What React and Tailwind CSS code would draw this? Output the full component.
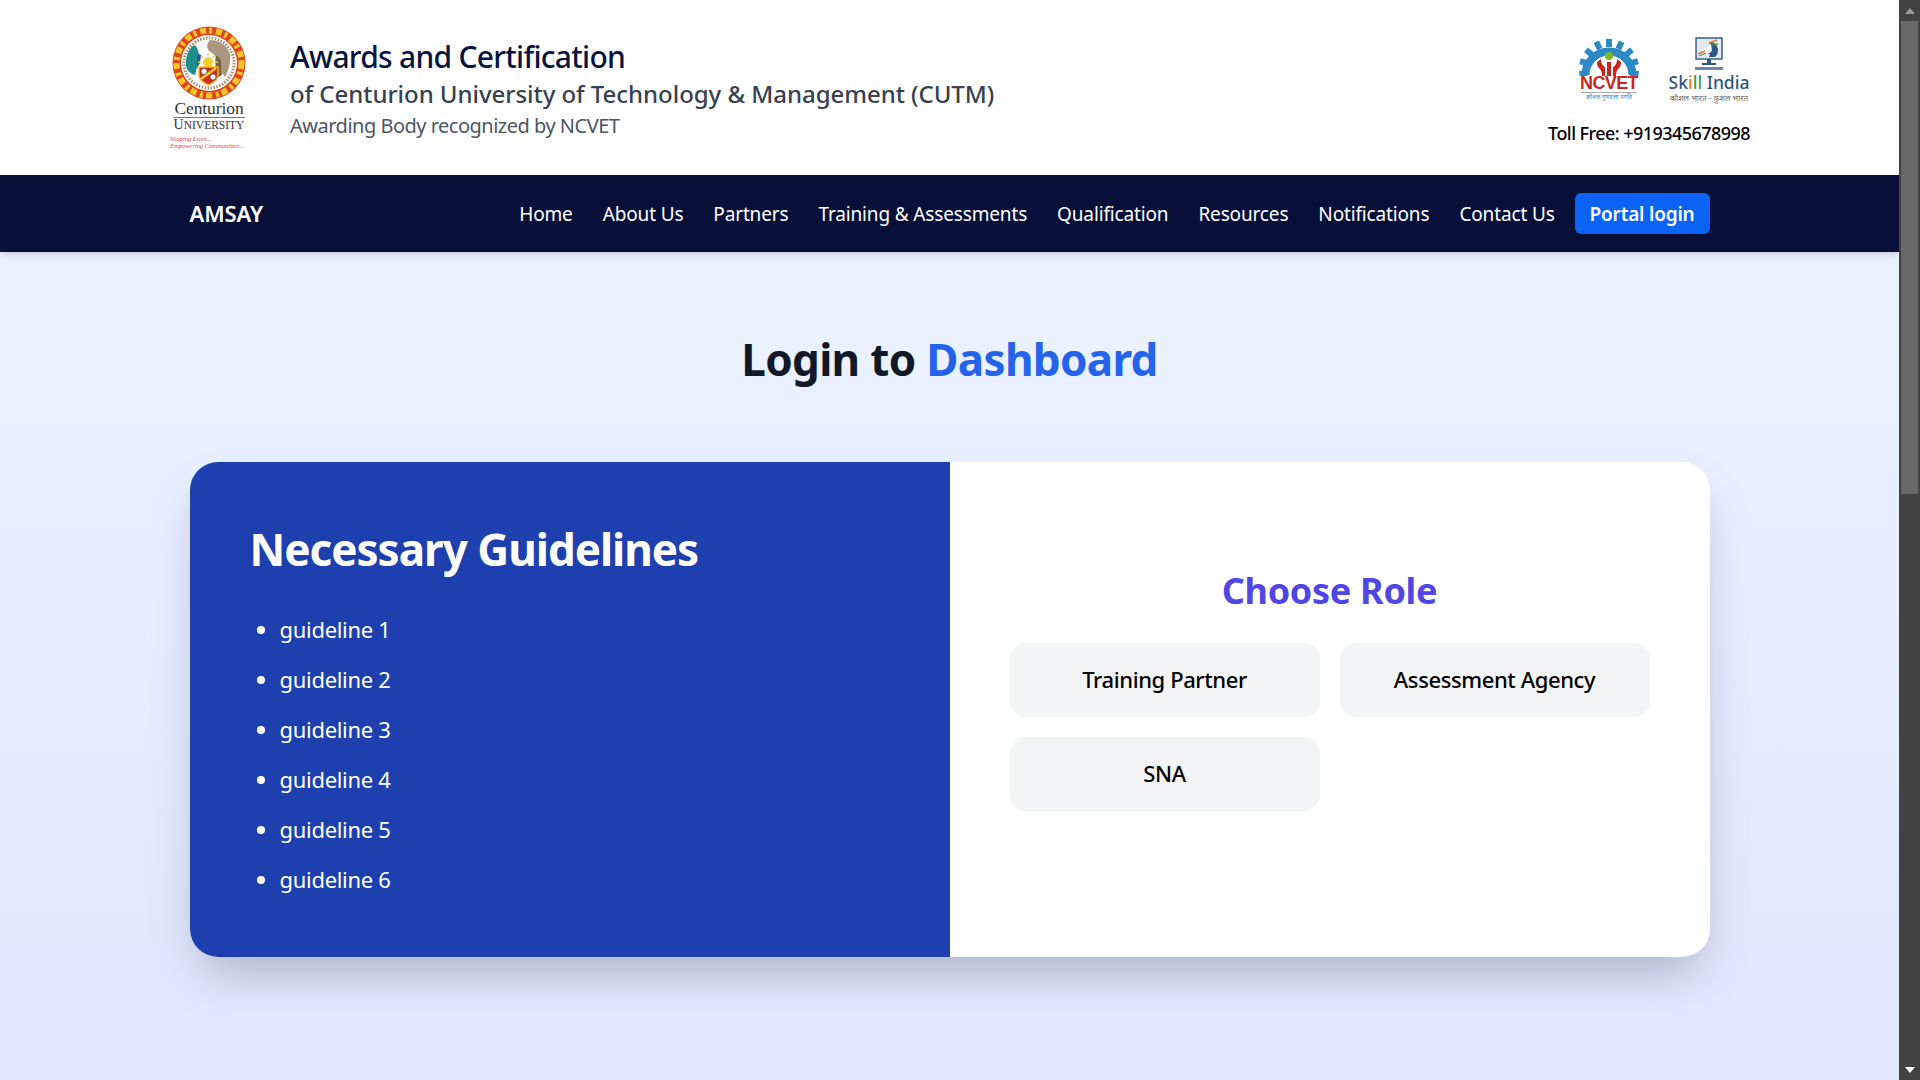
const navLinks = ['Home', 'About Us', 'Partners', 'Training & Assessments', 'Qualification', 'Resources', 'Notifications', 'Contact Us']
const guidelines = ['guideline 1', 'guideline 2', 'guideline 3', 'guideline 4', 'guideline 5', 'guideline 6']
const gearAngles = [-100, -75, -50, -25, 0, 25, 50, 75, 100]

function CenturionLogo() {
  return (
    <div className="flex w-[78px] flex-col items-center">
      <svg width="74" height="74" viewBox="0 0 74 74">
        <circle cx="37" cy="37" r="36.5" fill="#e0431f" />
        <circle cx="37" cy="37" r="32.5" fill="none" stroke="#f6c926" strokeWidth="6" strokeDasharray="6 3 3 4" />
        <circle cx="37" cy="37" r="28" fill="#fff" />
        <circle cx="37" cy="37" r="25" fill="none" stroke="#7d6a3a" strokeWidth="3" strokeDasharray="1.5 1.5" opacity="0.75" />
        {/* peacock */}
        <path d="M14 40c-1-10 3-18 9-21 3 3 4 8 4 12l-1 7-3 11c-5-1-8-5-9-9z" fill="#1d8f8a" />
        <path d="M25 30c1-2 3-2 4-1l-1 8-3 5z" fill="#2a4fa6" />
        {/* brown bird */}
        <path d="M38 14c9 0 17 5 20 14 1 8-1 16-5 23-3-3-4-8-5-12-2-7-6-11-11-14-3-4-2-8 1-11z" fill="#a99a7f" />
        <path d="M44 30c3 0 5 3 5 7l1 12-5 3-1-10c-1-4-1-8 0-12z" fill="#75654e" />
        {/* sun */}
        <circle cx="36" cy="36" r="5" fill="#f5cf2e" />
        <path d="M36 27v3M29 30l2 2M43 30l-2 2M26 36h3M46 36h-3" stroke="#f5cf2e" strokeWidth="1.4" />
        {/* shield */}
        <path d="M27 41h19v8c0 5-5 8-9.500 10-4.500-2-9.500-5-9.500-10z" fill="#d62a1f" stroke="#f1b81a" strokeWidth="1.4" />
        <path d="M29 53l15-11" stroke="#f5cf2e" strokeWidth="2.600" />
        <circle cx="32" cy="45.500" r="3" fill="#fff" stroke="#333" strokeWidth="0.6" />
        <circle cx="41" cy="51" r="3" fill="#fff" stroke="#333" strokeWidth="0.6" />
      </svg>
      <div className="mt-[1px] font-['Liberation_Serif',serif] text-[17.5px] leading-[15px] tracking-[-0.1px] text-[#333]">Centurion</div>
      <div className="mt-[1px] w-[72px] border-t border-[#777] text-center font-['Liberation_Serif',serif] text-[11.5px] leading-[14px] whitespace-nowrap text-[#333]">
        <span className="text-[14px]">U</span>NIVERSITY
      </div>
      <div className="mt-[3px] w-[78px] font-['Liberation_Serif',serif] text-[6.5px] leading-[7.5px] whitespace-nowrap text-[#d8404a] italic">
        Shaping Lives...
        <br />
        Empowering Communities...
      </div>
    </div>
  )
}

function NcvetLogo() {
  return (
    <div className="flex w-[62px] flex-col items-center">
      <svg width="62" height="39" viewBox="0 0 62 39">
        {/* gear ring, open at the bottom */}
        <path d="M7.500 38A23.500 23.500 0 1 1 54.500 38" fill="none" stroke="#2b8ac6" strokeWidth="8" />
        {gearAngles.map((a) => (
          <rect key={a} x="28" y="2" width="6" height="8" fill="#2b8ac6" transform={`rotate(${a} 31 32)`} />
        ))}
        <circle cx="31" cy="19" r="4" fill="#7ab929" />
        <path d="M19 25l4-3c0 5 2 7 4 8v9h-3c0-4-1-6-3-8-2-2-2-4-2-6zM43 25l-4-3c0 5-2 7-4 8v9h3c0-4 1-6 3-8 2-2 2-4 2-6z" fill="#c8281e" />
        <path d="M29 25h4v14h-4z" fill="#c8281e" />
      </svg>
      <div className="font-['Liberation_Sans',sans-serif] text-[18px] leading-[15px] font-bold tracking-[-0.6px] text-[#c8281e]">NCVET</div>
      <div className="mt-[1px] w-[56px] border-t border-[#aaa] text-center font-['Noto_Sans',sans-serif] text-[6px] leading-[9px] whitespace-nowrap text-[#2b8ac6]">कौशल गुणवत्ता प्रगति</div>
    </div>
  )
}

function SkillIndiaLogo() {
  return (
    <div className="flex w-[82px] flex-col items-center">
      <svg width="30" height="33" viewBox="0 0 30 33">
        <rect x="2" y="1" width="26" height="21" fill="#e4e9f1" stroke="#2f5585" strokeWidth="1.400" />
        <path d="M18 5c3 1 6 4 6 8 0 3-1 5-3 7h-6l1-3c-3 0-5-1-6-3 2-4 5-7 8-9z" fill="#2f5585" />
        <path d="M8 15c2-4 5-7 9-8l1 7-4 3c-3 0-5-1-6-2z" fill="#fff" />
        <path d="M15 6l8-3M4 17l7-3" stroke="#e9772a" strokeWidth="1.500" />
        <path d="M5 19l7-3M17 8l7-1" stroke="#3d9a46" strokeWidth="1.300" />
        <path d="M13 22h4v5h-4zM8 26h14v2H8z" fill="#2f5585" />
        <path d="M1 30h28v3H1z" fill="#2f5585" opacity="0.7" />
      </svg>
      <div className="mt-[3px] font-['Noto_Sans',sans-serif] text-[17.5px] leading-[18px] font-medium whitespace-nowrap text-[#2f5585]">
        Sk<span className="text-[#e9772a]">i</span><span className="text-[#3d9a46]">ll</span> India
      </div>
      <div className="mt-[1px] font-['Noto_Sans',sans-serif] text-[8px] leading-[11px] whitespace-nowrap text-[#666]">कौशल भारत - कुशल भारत</div>
    </div>
  )
}

function Scrollbar() {
  return (
    <div className="flex h-screen w-[21px] shrink-0 flex-col items-center bg-[#424242]">
      <div className="flex h-[21px] w-full items-center justify-center">
        <svg width="10" height="6" viewBox="0 0 10 6"><path d="M5 0l5 6H0z" fill="#9a9a9a" /></svg>
      </div>
      <div className="h-[473px] w-[17px] bg-[#686868]" />
      <div className="flex-1" />
      <div className="flex h-[21px] w-full items-center justify-center">
        <svg width="10" height="6" viewBox="0 0 10 6"><path d="M5 6L0 0h10z" fill="#fff" /></svg>
      </div>
    </div>
  )
}

export default function App() {
  return (
    <div className="flex h-screen overflow-hidden font-['Noto_Sans',sans-serif]">
      <div className="flex min-w-0 flex-1 flex-col bg-gradient-to-b from-[#eff6ff] to-[#e0e7ff]">
        {/* Top header */}
        <header className="flex h-[175px] shrink-0 items-center justify-between bg-white pr-[149px] pl-[170px]">
          <div className="flex items-center gap-[42px]">
            <CenturionLogo />
            <div className="flex flex-col pt-[2px]">
              <h1 className="text-[30px] leading-[38px] font-medium tracking-[-0.72px] text-[#0a1440]">Awards and Certification</h1>
              <p className="text-[24px] leading-[36px] font-medium tracking-[-0.04px] text-[#374151]">of Centurion University of Technology &amp; Management (CUTM)</p>
              <p className="text-[20px] leading-[28px] tracking-[-0.5px] text-[#4b5563]">Awarding Body recognized by NCVET</p>
            </div>
          </div>
          <div className="flex flex-col items-end pt-[6px]">
            <div className="flex items-start gap-[28px]">
              <NcvetLogo />
              <SkillIndiaLogo />
            </div>
            <div className="mt-[18px] text-[18px] leading-[24px] font-medium tracking-[-0.55px] text-black">Toll Free: +919345678998</div>
          </div>
        </header>

        {/* Nav */}
        <nav className="h-[77px] shrink-0 bg-[#081039] shadow-md">
          <div className="mx-auto flex h-full w-[1520px] items-center justify-between">
            <span className="text-[22px] font-semibold tracking-[-0.1px] text-white">AMSAY</span>
            <div className="flex items-center gap-[30px]">
              {navLinks.map((link) => (
                <a key={link} className="pt-[2px] text-[19px] tracking-[-0.15px] whitespace-nowrap text-white">{link}</a>
              ))}
              <button className="-ml-[10px] h-[41px] rounded-md bg-[#0b63f6] px-[15px] pt-[2px] text-[19px] font-semibold tracking-[-0.2px] text-white">Portal login</button>
            </div>
          </div>
        </nav>

        {/* Main */}
        <main className="flex flex-1 flex-col items-center pt-[74px]">
          <h2 className="text-[44px] leading-[66px] font-bold tracking-[-0.68px] text-[#111827]">
            Login to <span className="text-[#2563eb]">Dashboard</span>
          </h2>
          <div className="mt-[70px] flex h-[495px] w-[1520px] overflow-hidden rounded-[28px] bg-white shadow-2xl">
            <section className="w-1/2 bg-[#1e40af] p-[60px] text-white">
              <h3 className="text-[44px] leading-[54px] font-bold tracking-[-1px]">Necessary Guidelines</h3>
              <ul className="mt-[38px] flex list-disc flex-col gap-[20px] pl-[30px] text-[22px] leading-[30px] tracking-[-0.3px]">
                {guidelines.map((g) => (
                  <li key={g}>{g}</li>
                ))}
              </ul>
            </section>
            <section className="w-1/2 px-[60px] pt-[104px]">
              <h3 className="text-center text-[36px] leading-[50px] font-bold tracking-[-0.3px] text-[#4f46e5]">Choose Role</h3>
              <div className="mt-[27px] grid grid-cols-2 gap-[20px]">
                {['Training Partner', 'Assessment Agency', 'SNA'].map((role) => (
                  <button key={role} className="h-[74px] rounded-2xl bg-[#f3f4f6] pb-[2px] text-[22px] font-medium tracking-[-0.4px] text-black">{role}</button>
                ))}
              </div>
            </section>
          </div>
        </main>
      </div>
      <Scrollbar />
    </div>
  )
}
